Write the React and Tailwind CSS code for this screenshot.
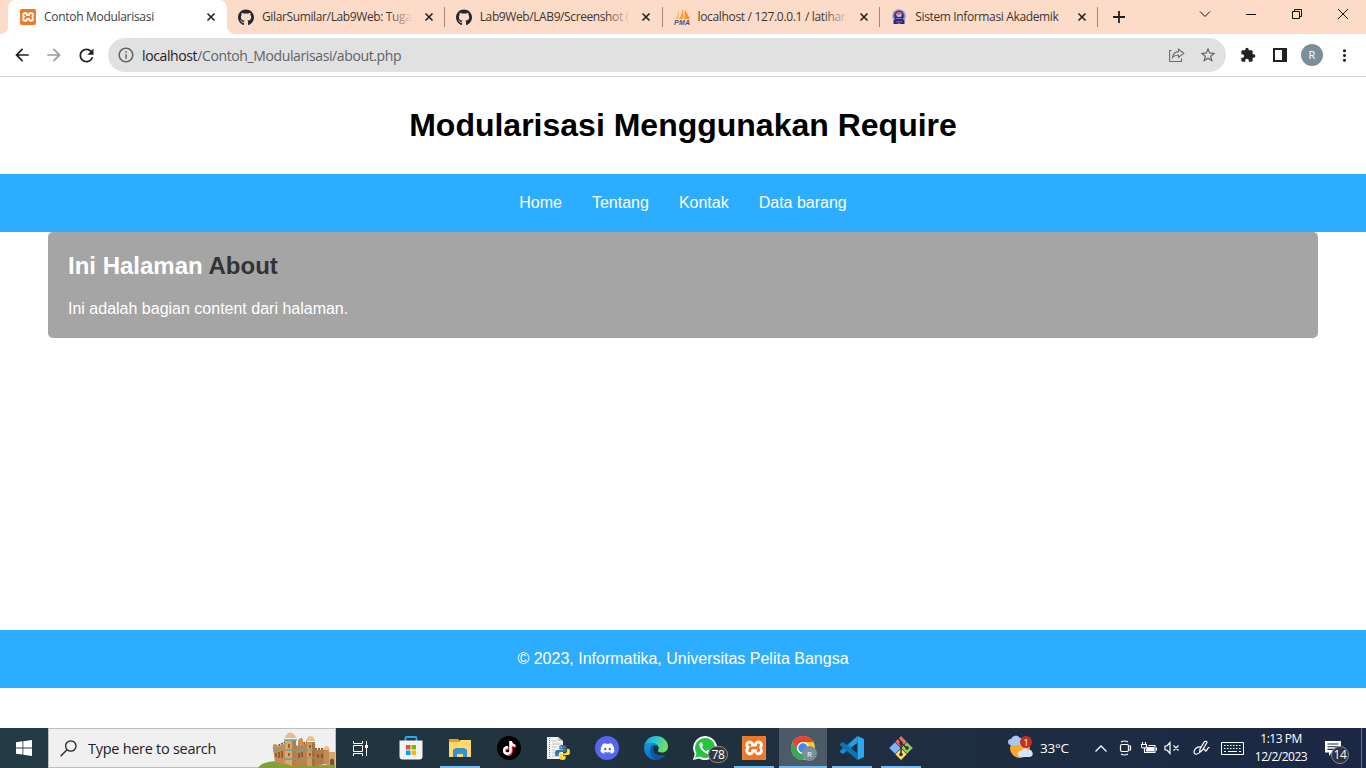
import React from "react";
import { FaGithub, FaTiktok, FaDiscord } from "react-icons/fa";
import { SiXampp } from "react-icons/si";
import { MdArrowBack, MdArrowForward, MdRefresh, MdInfoOutline, MdStarBorder, MdExtension, MdMoreVert } from "react-icons/md";

const Xampp = ({ size }) => (
  <div className="rounded-[2px] bg-white">
    <SiXampp size={size} color="#f37623" />
  </div>
);

const Pma = () => (
  <svg width="16" height="17" viewBox="0 0 16 17">
    <path d="M1 10C3 7 4 4 4.500 1C5.500 4 5.300 7 4.600 10z" fill="#f9c27c" />
    <path d="M5 10C7 7 8 4 8.600 0C10 4 10 7 9 10z" fill="#f9a13a" />
    <path d="M10 10C11 8 11 5 10.500 1C13 4 15 7 15.500 10z" fill="#f7941d" />
    <text x="0" y="16.300" fontFamily="Liberation Sans, sans-serif" fontWeight="bold" fontStyle="italic" fontSize="7" textLength="16" fill="#4a4e8c">PMA</text>
  </svg>
);

const Crest = () => (
  <svg width="16" height="16" viewBox="0 0 16 16">
    <circle cx="8" cy="7" r="6.700" fill="#8f8cc0" />
    <circle cx="8" cy="6.800" r="5" fill="#3a3590" />
    <circle cx="8" cy="5.500" r="2.600" fill="#c9b8d4" />
    <circle cx="7.800" cy="4.500" r="1.400" fill="#e4534d" />
    <path d="M4 8h8v3H4z" fill="#302b83" />
    <path d="M2.500 11h11v4H10l-2-.6-2 .6H2.500z" fill="#2b2780" />
    <path d="M5 9.500h6M5 12.800h6" stroke="#8f8cc8" strokeWidth=".8" />
  </svg>
);

const Close = () => (
  <svg width="10" height="10" viewBox="0 0 10 10"><path d="M1.500 1.500l7 7M8.500 1.500l-7 7" stroke="#202124" strokeWidth="1.600" /></svg>
);

function Tab({ icon, title, tracking, fade }) {
  return (
    <div className="flex h-[34px] w-[217.75px] shrink-0 items-center pl-[11px]">
      <div className="flex w-4 shrink-0 justify-center">{icon}</div>
      <div className="relative ml-2 w-[151px]">
        <div className={"whitespace-nowrap text-[12px] leading-4 text-[#3c3633] " + tracking}>{title}</div>
        {fade && <div className="absolute inset-y-0 right-0 w-[26px] bg-gradient-to-r from-[#fddbc9]/0 to-[#fddbc9]" />}
      </div>
      <div className="ml-[10.500px]"><Close /></div>
      <div className="ml-auto h-5 w-px bg-[#9d8a81]" />
    </div>
  );
}

function Browser() {
  return (
    <div className="shrink-0 font-['Open_Sans','Noto_Sans',sans-serif]">
      <div className="flex h-[34px] bg-white">
        <div className="w-2 shrink-0 rounded-br-[7px] bg-[#fddbc9]" />
        <div className="shrink-0 bg-[#fddbc9]">
          <div className="flex h-[34px] w-[219px] items-center rounded-t-[8px] bg-white pl-3">
            <Xampp size={16} />
            <div className="ml-2 w-[151px] whitespace-nowrap text-[12px] leading-4 tracking-[-0.300px] text-[#3c4043]">Contoh Modularisasi</div>
            <div className="ml-[11px]"><Close /></div>
          </div>
        </div>
        <div className="flex min-w-0 flex-1 rounded-bl-[8px] bg-[#fddbc9]">
          <Tab icon={<FaGithub size={17} color="#24292f" />} title="GilarSumilar/Lab9Web: Tuga" tracking="tracking-[-0.370px]" fade />
          <Tab icon={<FaGithub size={17} color="#24292f" />} title="Lab9Web/LAB9/Screenshot (" tracking="tracking-[-0.400px]" fade />
          <Tab icon={<Pma />} title="localhost / 127.0.0.1 / latihar" tracking="tracking-[-0.330px]" fade />
          <Tab icon={<Crest />} title="Sistem Informasi Akademik" tracking="tracking-[-0.360px]" />
          <svg className="ml-[15px] mt-[11px]" width="12" height="12" viewBox="0 0 12 12"><path d="M6 0v12M0 6h12" stroke="#202124" strokeWidth="1.800" /></svg>
          <svg className="ml-auto" width="168" height="34" viewBox="0 0 168 34" fill="none" stroke="#111" strokeWidth="1">
            <path d="M2 11.500l5 5 5-5M48 14.500h10M94.500 11.500h7v7h-7zM96.500 11v-1.500h7v7h-2M140 9l10 10M150 9l-10 10" />
          </svg>
        </div>
      </div>
      <div className="flex h-[43px] items-center border-b border-[#cfcfcf] bg-white">
        <MdArrowBack className="ml-3 shrink-0" size={20} color="#202124" />
        <MdArrowForward className="ml-3 shrink-0" size={20} color="#9a9b9d" />
        <MdRefresh className="ml-3 shrink-0" size={21} color="#202124" />
        <div className="ml-[11px] flex h-[34px] w-[1118px] shrink-0 items-center rounded-full bg-[#e1e1e1]">
          <MdInfoOutline className="ml-[9px] shrink-0" size={18} color="#5f6368" />
          <div className="ml-[7px] whitespace-nowrap text-[14px] tracking-[-0.380px] text-[#5f6368]"><span className="text-[#202124]">localhost</span>/Contoh_Modularisasi/about.php</div>
          <svg className="ml-auto" width="16" height="16" viewBox="0 0 16 16" fill="none" stroke="#696c70" strokeWidth="1.100"><path d="M2.500 3.500H.6v11h11.900v-3M9.500 2.200l5.300 4-5.300 4.200V8C7 8 5 8.800 3.500 10.500C4 7 6 4.800 9.500 4.600z" /></svg>
          <MdStarBorder className="ml-[14px] mr-[9px]" size={18} color="#5f6368" />
        </div>
        <MdExtension className="ml-[14px] shrink-0" size={16} color="#202124" />
        <svg className="ml-[17px] shrink-0" width="14" height="14" viewBox="0 0 14 14"><path d="M1 1h12v12H1z" fill="none" stroke="#202124" strokeWidth="2" /><path d="M9 0h5v14H9z" fill="#202124" /></svg>
        <div className="ml-[14px] flex size-[22px] shrink-0 items-center justify-center rounded-full bg-[#78909c] text-[11px] font-medium text-white">R</div>
        <MdMoreVert className="ml-[12px] shrink-0" size={19} color="#202124" />
      </div>
    </div>
  );
}

const Store = () => (
  <svg width="24" height="26" viewBox="0 0 24 26">
    <path d="M6.500 6V2.800Q6.500 2 7.500 2h9q1 0 1 .8V6" fill="none" stroke="#22aef0" strokeWidth="1.800" />
    <path d="M.5 5.500h23v16a3 3 0 0 1-3 3h-17a3 3 0 0 1-3-3z" fill="#f3f3f3" />
    <path d="M7 10h4.500v4.500H7z" fill="#f04f23" /><path d="M12.500 10H17v4.500h-4.500z" fill="#7db800" />
    <path d="M7 15.500h4.500V20H7z" fill="#00a3ee" /><path d="M12.500 15.500H17V20h-4.500z" fill="#fdb900" />
  </svg>
);
const Explorer = () => (
  <svg width="22" height="20" viewBox="0 0 22 20">
    <path d="M0 1h9l2 2v3H0z" fill="#e5a21a" /><path d="M0 4h10l1.500-2H22v17H0z" fill="#ffda6a" />
    <path d="M4 19v-7q0-1 1-1h12q1 0 1 1v7h-4v-3H8v3z" fill="#3292df" /><path d="M6 11v-.800h10v.800z" fill="#1c75b9" />
  </svg>
);
const Tiktok = () => (
  <div className="relative flex size-6 items-center justify-center rounded-full bg-black">
    <FaTiktok className="absolute left-[4.500px] top-[4.500px]" size={14} color="#25f4ee" />
    <FaTiktok className="absolute left-[6px] top-[6px]" size={14} color="#fe2c55" />
    <FaTiktok className="absolute left-[5.300px] top-[5.300px]" size={14} color="#fff" />
  </div>
);
const PythonFile = () => (
  <svg width="24" height="24" viewBox="0 0 24 24">
    <path d="M1 1h11l5 4v18H1z" fill="#f2f2f2" /><path d="M12 1v4h5" fill="#c4c4c4" />
    <path d="M3.500 2v20" stroke="#8a8a8a" strokeDasharray="1 1" /><path d="M6 5h5M6 8h9M6 11h4M6 14h3M6 17h3M6 20h5" stroke="#c2c2c2" strokeWidth="1" />
    <svg x="9" y="9" width="15" height="15" viewBox="0 0 24 24">
      <path d="M12 0C7 0 7 2 7 4v3h6v1H4C1 8 0 10 0 13s1 5 3 5h3v-3c0-2 1-4 4-4h5c2 0 3-1 3-3V4c0-3-2-4-6-4z" fill="#3874a5" />
      <path d="M12 24c5 0 5-2 5-4v-3h-6v-1h9c3 0 4-2 4-5s-1-5-3-5h-2v3c0 2-1 4-4 4h-5c-2 0-3 1-3 3v4c0 3 2 4 5 4z" fill="#ffd43b" />
      <circle cx="10" cy="3.500" r="1" fill="#fff" /><circle cx="14" cy="20.500" r="1" fill="#fff" />
    </svg>
  </svg>
);
const Edge = () => (
  <svg width="24" height="24" viewBox="0 0 24 24">
    <defs>
      <linearGradient id="ea" x1="0" y1="0" x2="1" y2=".3"><stop stopColor="#1899e0" /><stop offset=".5" stopColor="#30c6d1" /><stop offset="1" stopColor="#6ae35a" /></linearGradient>
      <linearGradient id="eb" x1="0" y1="0" x2=".7" y2="1"><stop stopColor="#1b9de2" /><stop offset="1" stopColor="#0860b5" /></linearGradient>
    </defs>
    <path d="M.3 10C1.200 4 6 0 12 0c7 0 12 5 12 10.500C24 14 21.500 16.500 18 16.500c-3 0-4.500-1-4-2.200.9-1 1-2.200.4-3.600C12.600 6.500 4 5.500.3 10z" fill="url(#ea)" />
    <path d="M.2 10.500C3 5.500 11.500 5.500 14 10c-3-1.500-5 .3-5 3.500 0 4 5 7.500 12.500 5.500C18 24 10 26 4.500 21.500 1 18.500-.3 14.500.2 10.500z" fill="url(#eb)" />
    <path d="M8 9.500C5 12 5.500 20 12 24c4 0 7.500-2 9.700-5C16 21 9 18.500 9 13.500c0-2 .8-3.500 2.500-4.200-1-.5-2.500-.4-3.500.2z" fill="#124c9a" opacity=".75" />
  </svg>
);
const Whatsapp = () => (
  <div className="relative size-6">
    <svg width="24" height="24" viewBox="0 0 24 24"><path d="M0 24l1.700-6A12 12 0 1 1 6 22.400z" fill="#fff" /><path d="M2.200 21.800l1.300-4.600A10 10 0 1 1 7 20.600z" fill="#25c33f" /><path d="M8 6.300c-2 1-2 3-.5 5.700s4 4.800 6.500 5.700c2 .6 3.600-.3 4-2.400l-3-1.600-1.500 1.600c-2-.7-3.500-2-4.600-4.200L10 9.500 9 6.500z" fill="#fff" /></svg>
    <div className="absolute left-[15px] top-[10px] flex h-[17px] w-5 items-center justify-center rounded-full border border-[#8b8f92] bg-[#34383b] text-[12px] leading-none tracking-[-0.300px] text-white">78</div>
  </div>
);
const Chrome = () => (
  <div className="relative size-6">
    <svg width="24" height="24" viewBox="0 0 24 24">
      <circle cx="12" cy="12" r="12" fill="#fcc934" />
      <path d="M1.600 6A12 12 0 0 1 22.400 6H12a6 6 0 0 0-5.200 9z" fill="#ea4335" />
      <path d="M1.600 6A12 12 0 0 0 12 24l5.200-9A6 6 0 0 1 6.800 15z" fill="#34a853" />
      <circle cx="12" cy="12" r="6" fill="#fff" /><circle cx="12" cy="12" r="4.700" fill="#4285f4" />
    </svg>
    <div className="absolute left-[11px] top-[10px] flex size-[15px] items-center justify-center rounded-full bg-[#78909c] text-[8px] text-white">R</div>
  </div>
);
const Code = () => (
  <svg width="24" height="24" viewBox="0 0 24 24">
    <path d="M17.500 0L24 3v18l-6.500 3z" fill="#2aa8f2" />
    <path d="M17.500 0v6.500L3 18 0 16.200v-1.500z" fill="#168ad5" />
    <path d="M17.500 24v-6.500L3 6 0 7.700v1.500z" fill="#0877b9" />
    <path d="M17.500 0L9 8.500l3 2.300 5.500-4.300z" fill="#2b9ce0" />
  </svg>
);
const Git = () => (
  <svg width="24" height="24" viewBox="0 0 24 24">
    <path d="M12 0l5.700 5.700L12 11.400 6.300 5.700z" fill="#f16b66" /><path d="M6 6.200l5.700 5.700L6 17.700.2 12z" fill="#80b3ff" />
    <path d="M18 6.200l5.800 5.800-5.800 5.700-5.700-5.700z" fill="#91c95d" /><path d="M12 12.400l5.700 5.800L12 24l-5.700-5.800z" fill="#ffdc65" />
    <path d="M9 2l3 4v13M12 7l6 5" stroke="#303030" strokeWidth="1.500" fill="none" /><circle cx="12" cy="7" r="1.800" fill="#303030" /><circle cx="18" cy="12" r="1.800" fill="#303030" /><circle cx="12" cy="18.500" r="1.800" fill="#303030" />
  </svg>
);
const Fort = () => (
  <svg width="78" height="36" viewBox="0 0 78 36">
    <path d="M0 36Q3 30 18 29L40 31Q60 35 77 32v4z" fill="#82a138" />
    <path d="M15 17l14-6v22l-12-3z" fill="#c58d51" /><path d="M36 16l13-5v22l-13 2z" fill="#b98450" />
    <path d="M15 19l13-5M37 20l12-3" stroke="#6fa69b" strokeWidth="1.300" />
    <path d="M15 16l13-6M37 15l12-5" stroke="#8e5f38" strokeWidth="2" strokeDasharray="2 1" />
    <path d="M27 8h11v25l-5 1-6-3z" fill="#dba76b" /><path d="M34 8h4v25l-4 1z" fill="#b87c46" />
    <path d="M27 6q1-5 5-5.500Q37 1 38 6z" fill="#e9bd85" />
    <path d="M26 8h13M27 18h11M27 27h11" stroke="#55aaa4" strokeWidth="1.700" />
    <path d="M40 14V9q1-3 3-3t2 3v4zM15 16v-3q2-2 4 0v3z" fill="#c99059" />
    <path d="M49 10h7v24h-7z" fill="#d69a5e" /><path d="M54 10h3v24h-3z" fill="#a96d3e" /><path d="M48 9q1-5 4.500-5T57 9z" fill="#edc088" /><path d="M49 11h8M49 18h8M49 26h8" stroke="#58a9a4" />
    <path d="M57 18h11v14l-11 2z" fill="#b77b48" /><path d="M57 17h11" stroke="#8e5f38" strokeWidth="2" strokeDasharray="2 1" />
    <path d="M68 20h9v13h-9z" fill="#d7a56e" /><path d="M66 18h5v14h-5z" fill="#c48c55" /><path d="M65 18q1-4 3.500-4t3.500 4z" fill="#edc088" />
    <path d="M18 21v4M21 20v6M24 19v7M31 12v4M31 21v3M41 21v5M44 20v5M52 13v3M52 21v3M60 22v4M64 22v4" stroke="#80512d" strokeWidth="1.500" />
    <path d="M72 33v-5q2-3 4 0v5z" fill="#745037" />
  </svg>
);

const apps = [
  { icon: <Store /> },
  { icon: <Explorer />, open: true },
  { icon: <Tiktok /> },
  { icon: <PythonFile /> },
  { icon: <div className="flex size-6 items-center justify-center rounded-full bg-[#5865f2]"><FaDiscord size={15} color="#fff" /></div> },
  { icon: <Edge /> },
  { icon: <Whatsapp /> },
  { icon: <Xampp size={24} />, open: true },
  { icon: <Chrome />, open: true, active: true },
  { icon: <Code />, open: true },
  { icon: <Git />, open: true },
];

function Taskbar() {
  const tray = "flex shrink-0 items-center justify-center";
  return (
    <div className="flex h-10 shrink-0 bg-gradient-to-r from-[#223b44] via-[#20313e] to-[#1b2745] font-['Open_Sans','Noto_Sans',sans-serif] text-white">
      <div className="flex w-12 shrink-0 items-center justify-center">
        <svg width="16" height="16" viewBox="0 0 16 16" fill="#fff"><path d="M0 2.200L6.500 1.300v6.200H0zM7.300 1.200L16 0v7.500H7.300zM0 8.400h6.500v6.200L0 13.700zM7.300 8.400H16V16l-8.700-1.200z" /></svg>
      </div>
      <div className="flex h-10 w-72 shrink-0 items-center border border-[#bdbdbd] bg-[#f0f0f0] pl-[11px]">
        <svg className="shrink-0" width="17" height="17" viewBox="0 0 17 17" fill="none" stroke="#222" strokeWidth="1.300"><circle cx="10.800" cy="6" r="5.200" /><path d="M7 9.800L.6 16.200" /></svg>
        <div className="ml-[11px] mt-px w-[170px] shrink-0 whitespace-nowrap text-[14.500px] tracking-[-0.280px] text-[#222]">Type here to search</div>
        <div className="mt-[3px] shrink-0"><Fort /></div>
      </div>
      <div className="flex w-[50px] shrink-0 items-center justify-center pr-[2px]">
        <svg width="17" height="17" viewBox="0 0 17 17" fill="none" stroke="#fff" strokeWidth="1"><path d="M1.500 1v2.500h9V1M1.500 5.500h9v6h-9zM1.500 16v-2.500h9V16M14.500 1v15" /><path d="M13 5h3v3h-3z" fill="#fff" stroke="none" /></svg>
      </div>
      {apps.map((a, i) => (
        <div key={i} className="flex w-[49px] shrink-0 pl-px">
          <div className={"flex w-12 flex-col items-center " + (a.active ? "bg-[#4d5b68]" : "")}>
            <div className="flex h-[38px] items-center pt-[2px]">{a.icon}</div>
            {a.open && <div className={"h-0.5 bg-[#76b9ed] " + (a.active ? "w-full" : "w-10")} />}
          </div>
        </div>
      ))}
      <div className="relative ml-[83px] flex w-[26px] shrink-0 items-center">
        <svg width="26" height="26" viewBox="0 0 26 26"><circle cx="12" cy="13" r="10" fill="#fca929" /><path d="M3 10a3 3 0 0 1 0-6 5 5 0 0 1 9-1 4 4 0 0 1 3 7z" fill="#a5c8f4" /><path d="M13 22a3 3 0 0 1 0-6 4 4 0 0 1 7-1 3.600 3.600 0 0 1 2 7z" fill="#d4e5fb" /></svg>
        <div className="absolute left-[12px] top-[8px] flex size-3 items-center justify-center rounded-full bg-[#c92d20] text-[9px] leading-none">1</div>
      </div>
      <div className="ml-[6px] flex w-[31px] shrink-0 items-center whitespace-nowrap text-[13.500px] tracking-[-0.200px]">33°C</div>
      <div className={tray + " ml-[18px] w-6"}><svg width="12" height="7" viewBox="0 0 12 7" fill="none" stroke="#fff" strokeWidth="1.300"><path d="M.5 6.500L6 1l5.500 5.500" /></svg></div>
      <div className={tray + " w-6"}><svg width="13" height="16" viewBox="0 0 13 16" fill="none" stroke="#fff" strokeWidth="1.200"><rect x="1.500" y="4.500" width="8" height="7" rx="1.500" /><path d="M9.500 6h2v4h-2M2 2q3.500-2 7 0M2 14q3.500 2 7 0" /></svg></div>
      <div className={tray + " w-[23px]"}><svg width="16" height="12" viewBox="0 0 16 12" fill="none" stroke="#fff" strokeWidth="1.100"><path d="M3.500 6V10.500h10.500v-7H7.500M15.500 5.500v3M.5 2.500h5v2q0 1.500-2.500 1.500T.5 4.500zM1.500 2V0M4.500 2V0" /><path d="M6 5.500h6.500V9H5.500z" fill="#fff" /></svg></div>
      <div className={tray + " w-6"}><svg width="16" height="14" viewBox="0 0 16 14" fill="none" stroke="#fff" strokeWidth="1.200"><path d="M1 5h2l3-3.500v11L3 9H1zM9.500 4.500l5 5M14.500 4.500l-5 5" /></svg></div>
      <div className={tray + " w-[34px]"}><svg width="17" height="16" viewBox="0 0 17 16" fill="none" stroke="#fff" strokeWidth="1.200"><path d="M6.500 12.500L7 9 11.500 1.500q2-.8 2.500 1L9.500 10zM8 7C4 6.500 1 9 1 12s3.500 2.500 4.500 1M9.500 10q2-2 2.500 0t1.500.5 1.500-2.500 1.500 0" /></svg></div>
      <div className={tray + " w-7"}><svg width="23" height="13" viewBox="0 0 23 13" fill="none" stroke="#fff"><path d="M.5 .5h22v12H.5z" /><path d="M3 3.500h17M3 6.500h17" strokeDasharray="1.500 1.500" /><path d="M3 9.500h2M7 9.500h9M18 9.500h2" /></svg></div>
      <div className="flex w-[70px] shrink-0 flex-col items-center justify-center whitespace-nowrap text-[12px] leading-[18px] tracking-[-0.500px]"><div>1:13 PM</div><div>12/2/2023</div></div>
      <div className={tray + " relative w-[34px]"}>
        <svg width="16" height="16" viewBox="0 0 16 16"><path d="M0 1h16v11.500H7L4 16v-3.500H0z" fill="#fff" /><path d="M2.500 4h11M2.500 6.700h11M2.500 9.400h7" stroke="#1b2745" strokeWidth="1.100" /></svg>
        <div className="absolute left-[15px] top-[18px] flex size-[18px] items-center justify-center rounded-full border border-[#858b93] bg-[#303239] text-[12px] leading-none tracking-tight">14</div>
      </div>
      <div className="ml-[11px] w-px bg-[#68728a]" />
    </div>
  );
}

export default function App() {
  return (
    <div className="flex h-[768px] w-[1366px] flex-col overflow-hidden bg-white">
      <Browser />
      <main className="flex flex-1 flex-col font-['Liberation_Sans',Arial,sans-serif] text-base text-white">
        <header className="flex h-[97px] shrink-0 items-center justify-center">
          <h1 className="text-[32px] font-bold leading-[37px] text-black">Modularisasi Menggunakan Require</h1>
        </header>
        <nav className="flex h-[58px] shrink-0 items-center justify-center gap-[30px] bg-[#2dadff]">
          <a>Home</a><a>Tentang</a><a>Kontak</a><a>Data barang</a>
        </nav>
        <section className="mx-12 h-[106px] shrink-0 rounded-[5px] bg-[#a5a5a5] px-5 pt-5">
          <h2 className="text-2xl font-bold leading-[28px]">Ini Halaman <span className="text-[#333]">About</span></h2>
          <p className="mt-5 leading-[18px]">Ini adalah bagian content dari halaman.</p>
        </section>
        <footer className="mb-10 mt-auto flex h-[58px] shrink-0 items-center justify-center bg-[#2dadff]">© 2023, Informatika, Universitas Pelita Bangsa</footer>
      </main>
      <Taskbar />
    </div>
  );
}
